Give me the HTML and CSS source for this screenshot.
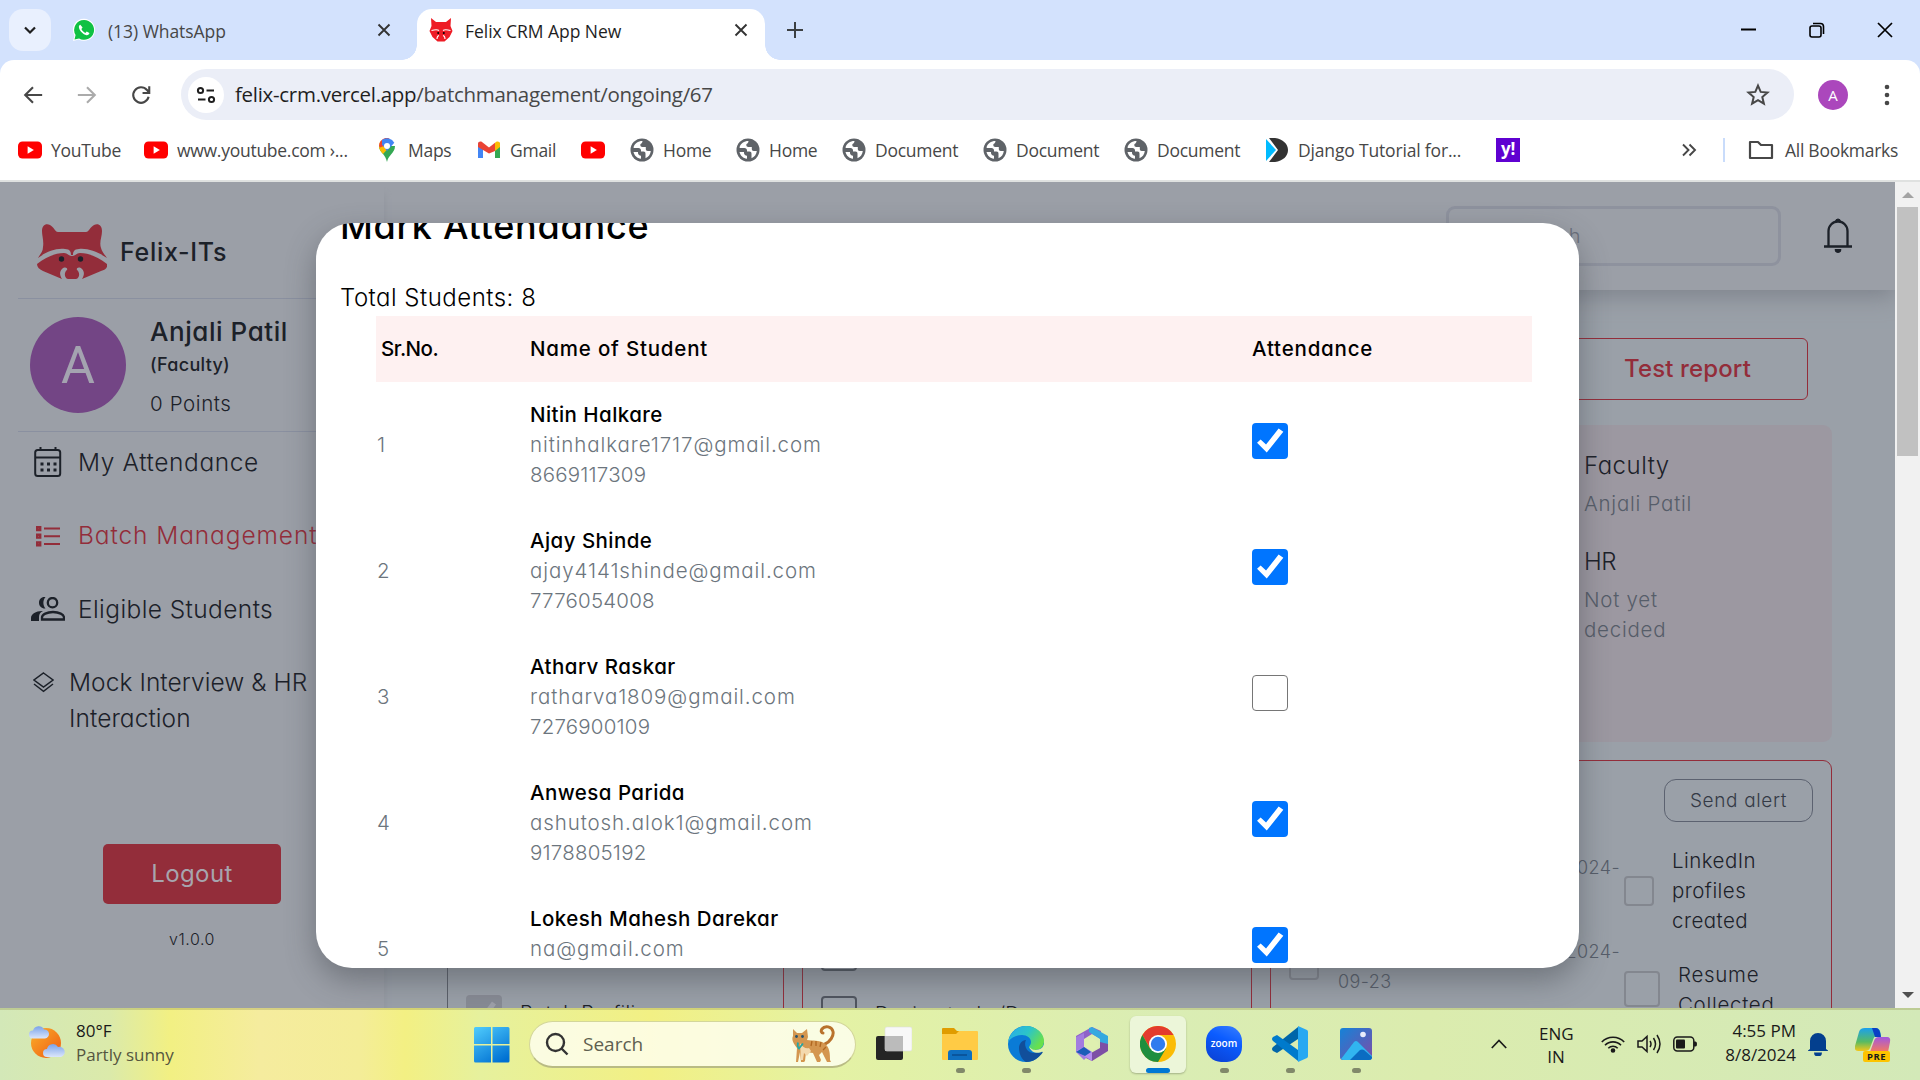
FILE: index.html
```html
<!DOCTYPE html>
<html lang="en">
<head>
<meta charset="utf-8">
<title>Felix CRM App New</title>
<link rel="stylesheet" href="styles.css">
</head>
<body>
<svg class="defs" width="0" height="0">
  <symbol id="yt" viewBox="0 0 24 24"><rect x="0" y="3.5" width="24" height="17" rx="4.5" fill="#f00"/><path d="M9.6 8.3v7.4l6.3-3.7z" fill="#fff"/></symbol>
  <symbol id="globe" viewBox="0 0 24 24"><circle cx="12" cy="12" r="11.5" fill="#5f6368"/><path d="M12.500 3c-4.500 0-8 2.500-9 6.500L4 10h4.500c1.500 0 2.500 1 2.500 2.300v1.200h2.500c1.300 0 2 .9 2 2.200v4.600c3-1.200 5-4 5.300-7.300h-3c-1.300 0-2-.8-2-2V9h-3.500c-1.200 0-2-.8-2-2 0-1.500 2.200-1.500 2.200-4zM3.500 14c.8 3.800 3.700 6.300 7.500 6.700v-3c-1.800 0-3-1.200-3-2.900V14z" fill="#fff"/></symbol>
  <symbol id="close" viewBox="0 0 16 16"><path d="M2.500 2.500l11 11M13.500 2.500l-11 11" stroke="currentColor" stroke-width="1.900"/></symbol>
  <symbol id="raccoon" viewBox="0 0 70 55"><path fill="currentColor" d="M5 7C5 1 9-1 13 1c4 2 5 7 8 7h28c3 0 4-5 8-7 4-2 8 0 8 6 0 6-3 11-1 17 1 4 4 7 6 10-9-6-19-10-28-9-5 0-6 3-6 6h-2c0-3-1-6-6-6C18 24 9 28 1 34c2-4 5-6 5-11 1-6-1-11-1-16zM0 40c8-6 17-11 27-11 4 0 4 3 8 3s4-3 8-3c10 0 19 5 27 11 1 4-2 6-6 7l-19 8c2-3 3-7 0-10-3-3-6-1-5 1 3 2 3 8-1 9h-8c-4-1-4-7-1-9 1-2-2-4-5-1-3 3-2 7 0 10L6 47C2 45 0 43 0 40z"/><circle cx="24.500" cy="35" r="2.700" fill="#1c2129"/><circle cx="43.500" cy="35" r="2.700" fill="#1c2129"/></symbol>
</svg>

<header class="tabstrip">
  <button class="tab-search"><svg width="16" height="16" viewBox="0 0 16 16"><path d="M3 5.500l5 5 5-5" fill="none" stroke="#1f1f1f" stroke-width="2.200"/></svg></button>
  <div class="tab">
    <svg class="fav" viewBox="0 0 24 24"><path d="M12 .8a11 11 0 0 0-9.500 16.600L1 23l5.800-1.500A11 11 0 1 0 12 .8z" fill="#fff"/><path d="M12 2a9.900 9.900 0 0 0-8.400 15l-1.100 4.500 4.600-1.100A9.900 9.900 0 1 0 12 2z" fill="#0fc143"/><path d="M8.300 6.800c-.9.200-1.600 1.300-1.400 2.500.6 3.700 4.200 7.300 7.600 7.900 1.500.2 2.800-.8 2.900-2.200l-2.700-1.500-1.300 1.400c-1.700-.7-3.300-2.300-4-3.900l1.200-1.400z" fill="#fff"/></svg>
    <span class="title">(13) WhatsApp</span>
    <svg class="x" width="16" height="16"><use href="#close"/></svg>
  </div>
  <div class="tab active">
    <svg class="fav red" viewBox="0 0 24 24"><path fill="currentColor" d="M2 0l5 4h10l5-4-.5 8 2 5-3 6-5 4.500h-7L3.500 19l-3-6 2-5z"/><path d="M2.500 12.500Q8 11 10 12.500M21.500 12.500Q16 11 14 12.500M8 21q0-3 2-3.500M16 21q0-3-2-3.500" stroke="#fff" stroke-width="1.100" fill="none"/><circle cx="9.200" cy="15" r="1"/><circle cx="14.800" cy="15" r="1"/></svg>
    <span class="title">Felix CRM App New</span>
    <svg class="x" width="16" height="16"><use href="#close"/></svg>
  </div>
  <svg class="plus" width="18" height="18" viewBox="0 0 18 18"><path d="M9 1v16M1 9h16" stroke="#3c4043" stroke-width="2"/></svg>
  <div class="winctl">
    <svg width="16" height="16" viewBox="0 0 16 16"><path d="M0 7.500h15" stroke="#000" stroke-width="2"/></svg>
    <svg width="16" height="16" viewBox="0 0 16 16" fill="none" stroke="#000" stroke-width="1.600"><rect x="1" y="4" width="11" height="11" rx="2"/><path d="M4 1.500h7.500a3 3 0 0 1 3 3V12"/></svg>
    <svg width="16" height="16" viewBox="0 0 16 16"><path d="M1 1l14 14M15 1L1 15" stroke="#000" stroke-width="1.700"/></svg>
  </div>
</header>

<div class="chrome">
  <div class="toolbar">
    <svg class="nav" viewBox="0 0 24 24"><path d="M22 12H4M12 3.500L3.500 12l8.500 8.500" fill="none" stroke="#474747" stroke-width="2.300"/></svg>
    <svg class="nav" viewBox="0 0 24 24"><path d="M2 12h18M12 3.500l8.500 8.500-8.500 8.500" fill="none" stroke="#ababab" stroke-width="2.300"/></svg>
    <svg class="nav" viewBox="0 0 24 24"><path d="M20.300 14A8.500 8.500 0 1 1 18.500 6.500L20.500 9M21 2.500v7.300h-7.300" fill="none" stroke="#474747" stroke-width="2.300"/></svg>
    <div class="omnibox">
      <span class="site"><svg width="20" height="20" viewBox="0 0 20 20" fill="none" stroke="#1f1f1f" stroke-width="2"><circle cx="4.500" cy="5.500" r="2.600"/><path d="M10.500 5.500H18M2 14.500h7.500"/><circle cx="15.500" cy="14.500" r="2.600"/></svg></span>
      <span class="url"><span class="host">felix-crm.vercel.app</span>/batchmanagement/ongoing/67</span>
      <svg width="24" height="24" viewBox="0 0 24 24"><path d="M12 2.600l2.700 6.300 6.800.6-5.200 4.500 1.600 6.700L12 17.200l-5.900 3.500L7.700 14 2.500 9.500l6.800-.6z" fill="none" stroke="#474747" stroke-width="2"/></svg>
    </div>
    <span class="me">A</span>
    <svg class="dots" width="6" height="22" viewBox="0 0 6 22" fill="#474747"><circle cx="3" cy="3" r="2.300"/><circle cx="3" cy="11" r="2.300"/><circle cx="3" cy="19" r="2.300"/></svg>
  </div>
  <nav class="bookmarks">
    <a class="bm b1"><svg><use href="#yt"/></svg><span>YouTube</span></a>
    <a class="bm b2"><svg><use href="#yt"/></svg><span>www.youtube.com ›...</span></a>
    <a class="bm b3"><svg viewBox="0 0 24 24"><path d="M12 24c-1-4-2-5.500-4-8-2-2.500-4-4.500-4-8l16 0c0 4-2 6-4 8.500S13 20 12 24z" fill="#34a853"/><path d="M4 8a8 8 0 0 1 1.900-5.200L14 9.500 8 16C6 13.500 4 11.500 4 8z" fill="#fbbc04"/><path d="M5.900 2.800A8 8 0 0 1 14.500.4L9 8 5 9.500 4 8q0-3 1.900-5.200z" fill="#ea4335"/><path d="M7 2A8 8 0 0 1 19.300 4.800L12 13 7 6.500z" fill="#4285f4"/><circle cx="12" cy="8" r="3" fill="#fff"/></svg><span>Maps</span></a>
    <a class="bm b4"><svg viewBox="0 0 24 24"><path d="M1 4.500v15.500h5V10z" fill="#4285f4"/><path d="M23 4.500v15.500h-5V10z" fill="#34a853"/><path d="M1 9V6c0-2.500 2.500-3 4-2l7 5.500V15.500z" fill="#ea4335"/><path d="M18 4.800l1-.8c1.500-1 4-.5 4 2v3l-5 4z" fill="#fbbc04"/><path d="M18 4.800v8.200l-6 2.500V9.500z" fill="#ea4335"/></svg><span>Gmail</span></a>
    <a class="bm b5"><svg><use href="#yt"/></svg></a>
    <a class="bm b6"><svg><use href="#globe"/></svg><span>Home</span></a>
    <a class="bm b7"><svg><use href="#globe"/></svg><span>Home</span></a>
    <a class="bm b8"><svg><use href="#globe"/></svg><span>Document</span></a>
    <a class="bm b9"><svg><use href="#globe"/></svg><span>Document</span></a>
    <a class="bm b10"><svg><use href="#globe"/></svg><span>Document</span></a>
    <a class="bm b11"><svg viewBox="0 0 24 24"><path d="M4 0h6c8 1 13 6 13 12S18 23 10 24H4l9-12z" fill="#333"/><path d="M1 1l10 11L1 23z" fill="#0bf"/></svg><span>Django Tutorial for...</span></a>
    <a class="bm b12"><span class="yahoo">y!</span></a>
    <svg class="more" width="16" height="16" viewBox="0 0 16 16"><path d="M2 2.500L7.500 8 2 13.500M8.500 2.500L14 8l-5.500 5.500" fill="none" stroke="#474747" stroke-width="1.900"/></svg>
    <i class="sep"></i>
    <svg class="folder" width="26" height="24" viewBox="0 0 26 24"><path d="M2 20V4h8l3 3h11v13z" fill="none" stroke="#474747" stroke-width="2.200" stroke-linejoin="round"/></svg>
    <span class="allbm">All Bookmarks</span>
  </nav>
</div>

<div class="viewport">
  <div class="app">
    <aside class="sidebar">
      <div class="brand"><svg width="70" height="55"><use href="#raccoon"/></svg><b>Felix-ITs</b></div>
      <div class="profile">
        <span class="avatar">A</span>
        <div><b class="pname">Anjali Patil</b><b class="role">(Faculty)</b><span class="points">0 Points</span></div>
      </div>
      <nav class="menu">
        <a class="attend"><svg class="i1" width="28" height="30" viewBox="0 0 28 30" fill="none" stroke="#1c2129" stroke-width="2"><rect x="1.200" y="3" width="25" height="26" rx="2.500"/><path d="M1 10.500h26M6.500 0v3M21.500 0v3"/><path d="M6.500 17h3m3.500 0h3m3.500 0h3M6.500 23h3m3.500 0h3m3.500 0h3" stroke-width="3"/></svg><span>My Attendance</span></a>
        <a class="on"><svg class="i2" width="24" height="21" viewBox="0 0 24 21" fill="none" stroke="currentColor" stroke-width="2"><path d="M8 2.500h16M8 10.200h16M8 17.900h16"/><path d="M1.200 1.200h3v2.800h-3zM1.200 8.800h3v2.800h-3zM1.200 16.500h3v2.800h-3z" stroke-width="2.400"/></svg><span>Batch Management</span></a>
        <a><svg class="i3" width="34" height="24" viewBox="0 0 34 24" fill="none" stroke="#1c2129" stroke-width="2.300"><circle cx="21.500" cy="5.700" r="4.700"/><path d="M11 22.500v-2c0-3 5-5.500 11-5.500s11 2.500 11 5.500v2z"/><path d="M13.500 0C10 0 8 2.500 8 5.700s2.500 6 6.500 5.800c-2.800-3.500-2.800-8 0-11.500zM8 24v-4c0-3 1.500-5 4-6-6-.5-12 2.500-12 7v3z" fill="#1c2129" stroke="none"/></svg><span>Eligible Students</span></a>
        <a class="mock"><svg class="i4" width="21" height="21" viewBox="0 0 21 21" fill="none" stroke="#1c2129" stroke-width="1.500"><path d="M10.500 1L20 8l-9.500 7L1 8zM1 12l9.500 7.300L20 12"/></svg><span>Mock Interview &amp; HR<br>Interaction</span></a>
      </nav>
      <button class="logout">Logout</button>
      <span class="ver">v1.0.0</span>
    </aside>
    <main class="main">
      <div class="topbar">
        <div class="search"><svg width="22" height="22" viewBox="0 0 22 22" fill="none" stroke="#6a707c" stroke-width="2.500"><circle cx="10" cy="9" r="7.500"/><path d="M15 15l6 6"/></svg><span>Search</span></div>
        <svg class="bell" width="28" height="36" viewBox="0 0 28 36" fill="none" stroke="#1c2129" stroke-width="2.300"><path d="M0 29.500h28M4.500 29V14a9.500 9.500 0 0 1 19 0v15"/><path d="M11.500 4.500a2.500 2.500 0 0 1 5 0zM11 32.500h6a3 3 0 0 1-6 0z" fill="#1c2129" stroke-width="1"/></svg>
      </div>
      <div class="content">
        <button class="report">Test report</button>
        <section class="info"><div>
          <h4>Faculty</h4><p>Anjali Patil</p>
          <h4 class="hr">HR</h4><p>Not yet<br>decided</p></div>
        </section>
        <div class="cards">
          <section class="card c1"><div class="task"><i class="cb done"><svg viewBox="0 0 36 36"><path d="M7 19l7 8L28 8" fill="none" stroke="#9da0a8" stroke-width="5"/></svg></i><span>Batch Profiling</span></div></section>
          <section class="card c2"><div class="task"><i class="cb"></i></div><div class="task"><i class="cb"></i><span>Design tasks/Demo</span></div></section>
          <section class="card c3">
            <div class="alertrow"><button class="alert">Send alert</button></div>
            <div class="cols">
              <div class="dates">
                <div class="date1">2024-</div>
                <div class="date2"><i class="cb sm"></i><div><span class="r">2024-</span><span>09-23</span></div></div>
              </div>
              <div class="todo">
                <div class="td"><i class="cb sm"></i><span>LinkedIn<br>profiles<br>created</span></div>
                <div class="td td2"><i class="cb lt"></i><span>Resume<br>Collected</span></div>
              </div>
            </div>
          </section>
        </div>
      </div>
    </main>
  </div>
  <div class="scrollbar"><i class="up"></i><i class="thumb"></i><i class="down"></i></div>

  <div class="modal">
    <h2>Mark Attendance</h2>
    <p class="total">Total Students: 8</p>
    <div class="table">
      <div class="row head"><span class="sr">Sr.No.</span><span>Name of Student</span><span>Attendance</span></div>
      <div class="row"><span class="no">1</span><div><b>Nitin Halkare</b><span class="mail">nitinhalkare1717@gmail.com</span><span class="tel">8669117309</span></div><i class="chk on"></i></div>
      <div class="row"><span class="no">2</span><div><b>Ajay Shinde</b><span class="mail">ajay4141shinde@gmail.com</span><span class="tel">7776054008</span></div><i class="chk on"></i></div>
      <div class="row"><span class="no">3</span><div><b>Atharv Raskar</b><span class="mail">ratharva1809@gmail.com</span><span class="tel">7276900109</span></div><i class="chk"></i></div>
      <div class="row"><span class="no">4</span><div><b>Anwesa Parida</b><span class="mail">ashutosh.alok1@gmail.com</span><span class="tel">9178805192</span></div><i class="chk on"></i></div>
      <div class="row"><span class="no">5</span><div><b>Lokesh Mahesh Darekar</b><span class="mail">na@gmail.com</span></div><i class="chk on"></i></div>
    </div>
  </div>
</div>

<footer class="taskbar">
  <div class="weather">
    <svg width="38" height="36" viewBox="0 0 38 36"><defs><linearGradient id="sun" x2="1" y2="1"><stop offset="0" stop-color="#fbb02a"/><stop offset="1" stop-color="#ee5a12"/></linearGradient><linearGradient id="cl" x2="0" y2="1"><stop offset="0" stop-color="#7ba3ea"/><stop offset="1" stop-color="#dbe6fb"/></linearGradient></defs><circle cx="18" cy="19" r="15" fill="url(#sun)"/><path d="M5 14.500a4 4 0 0 1 0-8 6 6 0 0 1 11-1 4.500 4.500 0 0 1 1 9z" fill="url(#cl)"/><path d="M19 33a4 4 0 0 1 0-8 6 6 0 0 1 11-2 5 5 0 0 1 3 10z" fill="url(#cl)"/></svg>
    <div>80°F<br><span class="dim">Partly sunny</span></div>
  </div>
  <svg class="win" width="36" height="36" viewBox="0 0 36 36"><defs><linearGradient id="wg" gradientUnits="userSpaceOnUse" x1="4" y1="0" x2="26" y2="36"><stop offset="0" stop-color="#4cc8fb"/><stop offset="1" stop-color="#0070d2"/></linearGradient></defs><path d="M0 1.500q0-1.500 1.500-1.500H17v17H0zM18.500 0H34q1.500 0 1.500 1.500V17h-17zM0 18.500h17v17H1.500Q0 35.500 0 34zM18.500 18.500h17V34q0 1.500-1.500 1.500H18.500z" fill="url(#wg)"/></svg>
  <div class="tsearch">
    <svg width="24" height="24" viewBox="0 0 24 24" fill="none" stroke="#333" stroke-width="2.400"><circle cx="10.500" cy="10.500" r="8.500"/><path d="M16.500 16.500l6 6"/></svg>
    <span>Search</span>
    <svg class="cat" width="46" height="38" viewBox="0 0 46 38"><path d="M35 19c5-2 9-8 8-12.500-1-5-8-6.500-11-2.500-1.500 2-.5 4 1 4" fill="none" stroke="#b9722c" stroke-width="3" stroke-linecap="round"/><path d="M3 4l4 4h5l5-4 1 8-1 3c6 1 12 0 17 3 6 4 6 11 6 17l1 2h-4l-2-4-3-6-3 3 2 5-1 2h-3l-4-9-7-1-1 9-1 1h-3l-1-10-2 10H6l1-14C4 19 1 15 3 11z" fill="#d4964f"/><path d="M10 18c2 4 6 6 9 5l2 3-4 5-3-3-1 7h-2z" fill="#f3d9ae"/><path d="M8 17.500q-1 4 1 6l4-5" fill="none" stroke="#23a6a6" stroke-width="1.800"/><circle cx="6.500" cy="11.500" r="1.400" fill="#27526b"/><circle cx="12.500" cy="11.500" r="1.400" fill="#27526b"/><path d="M22 16l-1 5M26 16v5M31 17l-1 5M36 22l-3 3" stroke="#b0661f" stroke-width="1.300"/></svg>
  </div>
  <div class="apps">
    <div class="ap"><svg viewBox="0 0 36 36"><rect x="0" y="10" width="27" height="24" rx="2" fill="#252525"/><rect x="9" y="1" width="27" height="24" rx="2" fill="#f8f8f8" stroke="#ddd" stroke-width=".6"/><path d="M9 10h18v15H9z" fill="#bbb"/></svg></div>
    <div class="ap run"><svg viewBox="0 0 36 36"><path d="M0 3q0-1 1-1h11l3 3h20v10H0z" fill="#e09c00"/><path d="M0 8h14l3-3h18q1 0 1 1v27q0 1-1 1H1q-1 0-1-1z" fill="#ffcb45"/><path d="M6 34V27q0-3 3-3h18q3 0 3 3v7z" fill="#0f6fc0"/><path d="M10 29h15" stroke="#0a4c91" stroke-width="1.500"/></svg></div>
    <div class="ap run"><svg viewBox="0 0 36 36"><defs><linearGradient id="eg" x2="1" y2=".5"><stop offset="0" stop-color="#27a9ee"/><stop offset=".55" stop-color="#2cc5c8"/><stop offset="1" stop-color="#68e04c"/></linearGradient></defs><circle cx="18" cy="18" r="18" fill="#0a7bd6"/><path d="M0 17C1 7 9 0 18 0c10 0 18 7 18 15 0 6-4 9-9 9-4 0-6-1-6-3 0-1 2-2 2-5 0-4-4-7-9-7C7 9 1 13 0 17z" fill="url(#eg)"/><path d="M11 22c0-4 3-8 7-8-2 3-1 12 7 13 4 0 7-1 10-1-4 6-10 10-17 10-4-2-7-8-7-14z" fill="#114f9b"/><path d="M36 18v9l-1.500-1.500C30 28 23 27 21.500 21c2 3 6 3.500 9 2.500 3-.8 5-3 5.500-5.500z" fill="#e1f0ac"/></svg></div>
    <div class="ap"><svg viewBox="0 0 36 36"><path d="M18 1l9 4v8l-9-5-8 5v10l-8-5V10z" fill="#8e62c8"/><path d="M15 2l3-1 16 9v14l-8-4v-7l-11-7z" fill="#34a8e0"/><path d="M34 18v7l-16 10-8-4 16-9v-6z" fill="#7d4fa5"/><path d="M2 11l8-4v14l8 5-8 8-8-8z" fill="#a27ce0"/><path d="M2 25l8-4 8 5v9z" fill="#b58cf0"/><path d="M10 21l7 5-6 4-9-4z" fill="#1c5db8"/><path d="M18 12l6 4v5l-6 4-6-4v-5z" fill="#dff0b0"/></svg></div>
    <div class="ap cur"><svg viewBox="0 0 36 36"><circle cx="18" cy="18" r="18" fill="#fbbc05"/><path d="M2.400 9A18 18 0 0 1 33.600 9H18L10 22z" fill="#e33b2e"/><path d="M2.400 9A18 18 0 0 0 18 36l8-13.500H10z" fill="#1e8e3e"/><circle cx="18" cy="18" r="9" fill="#fff"/><circle cx="18" cy="18" r="7.200" fill="#2f7cee"/></svg></div>
    <div class="ap run"><span class="zoom">zoom</span></div>
    <div class="ap run"><svg viewBox="0 0 36 36"><path d="M26 1v12L5 27l-4-2q-2-2 0-4z" fill="#0065a9"/><path d="M26 35V24L5 9l-4 2q-2 2 0 4z" fill="#007acc"/><path d="M26 0l9 4q1 .5 1 2v24q0 1.500-1 2l-9 4z" fill="#27a8f2"/></svg></div>
    <div class="ap run"><svg viewBox="0 0 36 36"><defs><linearGradient id="pg" x2="1" y2="1"><stop offset="0" stop-color="#1483d8"/><stop offset="1" stop-color="#7d4ca8"/></linearGradient></defs><rect x="2" y="2" width="32" height="32" rx="3" fill="url(#pg)"/><path d="M3 33l13-17q2-2 4 0l14 14q0 4-3 4H5z" fill="#31b5f0"/><path d="M12 34l10-10q2-1 4 0l8 7q0 3-3 3z" fill="#0a6cc2"/><circle cx="25" cy="8.500" r="2.800" fill="#e8ecfb"/></svg></div>
  </div>
  <div class="tray">
    <svg class="chev" width="16" height="10" viewBox="0 0 16 10"><path d="M.8 9L8 1.500 15.200 9" fill="none" stroke="#1a1a1a" stroke-width="1.700"/></svg>
    <div class="lang">ENG<br>IN</div>
    <svg class="wifi" width="24" height="18" viewBox="0 0 24 18" fill="none" stroke="#1a1a1a" stroke-width="1.600"><path d="M.8 7a15.500 15.500 0 0 1 22.400 0M4 10.300a11 11 0 0 1 16 0M7.300 13.200a6.600 6.600 0 0 1 9.400 0"/><circle cx="12" cy="15.500" r="1.500" fill="#1a1a1a"/></svg>
    <svg class="spk" width="25" height="20" viewBox="0 0 25 20" fill="none" stroke="#1a1a1a" stroke-width="1.500"><path d="M1 7h4l5-4.500v15L5 13H1zM13 7q2 3 0 6M16.500 4q4 6 0 12M20 1q6 9 0 18"/></svg>
    <svg class="bat" width="24" height="16" viewBox="0 0 24 16"><rect x=".8" y="1" width="20" height="14" rx="3.500" fill="none" stroke="#1a1a1a" stroke-width="1.500"/><rect x="3" y="3.500" width="9" height="9" rx="1" fill="#1a1a1a"/><path d="M21 5.500h1.500q1.500 0 1.500 2.500t-1.500 2.500H21z" fill="#1a1a1a"/></svg>
    <div class="clock">4:55 PM<br>8/8/2024</div>
    <svg class="nbell" width="20" height="23" viewBox="0 0 20 23" fill="#033f8e"><path d="M2 16V8a8 8 0 0 1 16 0v8l2 1.500V18H0v-.5zM6 19.500h8a4 4 0 0 1-8 0z"/></svg>
    <div class="copilot"><svg width="36" height="34" viewBox="0 0 36 34"><defs><linearGradient id="ca" x2="0" y2="1"><stop offset="0" stop-color="#1aa0ee"/><stop offset=".6" stop-color="#58bb62"/><stop offset="1" stop-color="#f5c718"/></linearGradient><linearGradient id="cb" x2="0" y2="1"><stop offset="0" stop-color="#a158e0"/><stop offset="1" stop-color="#f77a5c"/></linearGradient></defs><path d="M10 0h10q4 0 5 3l1 5h-4q-3 0-4 4l-3 8q-1 3-5 3H3q-4 0-3-5L4 4q1-4 6-4z" fill="url(#ca)"/><path d="M17 0h4q4 0 5 9h-6z" fill="#0a3fc5"/><path d="M24 9h8q4 0 3 5l-2 10H15l4-11q1-4 5-4z" fill="url(#cb)"/></svg><span class="pre">PRE</span></div>
  </div>
</footer>
</body>
</html>
```
FILE: styles.css
```css
* { box-sizing: border-box; }
body { margin: 0; width: 1920px; height: 1080px; overflow: hidden; display: flex; flex-direction: column; background: #d3e2fd; font-family: "Open Sans", "Noto Sans", sans-serif; color: #1f1f1f; }
button { font: inherit; border: 0; padding: 0; background: none; color: inherit; letter-spacing: inherit; }
h2, h4, p { margin: 0; font-weight: inherit; }
svg { display: block; flex: none; }
.defs { position: absolute; }
i { font-style: normal; display: block; }

/* browser tabs */
.tabstrip { height: 60px; display: flex; align-items: flex-start; padding: 9px 27px 0 9px; font-size: 17.500px; letter-spacing: -.05px; }
.tab-search { width: 42px; height: 42px; border-radius: 14px; background: #e9f0fe; display: grid; place-items: center; }
.tab { height: 51px; display: flex; align-items: center; padding: 0 25px 9px 21px; width: 366px; color: #474747; }
.tab .title { padding-top: 2px; }
.tab .fav { width: 24px; height: 24px; margin-right: 12px; }
.tab .red { color: #ee1c25; }
.tab .x { margin-left: auto; color: #333; }
.tab.active { position: relative; width: 348px; background: #fff; border-radius: 15px 15px 0 0; padding: 0 16px 9px 12px; color: #1f1f1f; }
.tab.active::before, .tab.active::after { content: ""; position: absolute; bottom: 0; width: 15px; height: 15px; }
.tab.active::before { left: -15px; background: radial-gradient(circle at 0 0, transparent 14.500px, #fff 15px); }
.tab.active::after { right: -15px; background: radial-gradient(circle at 100% 0, transparent 14.500px, #fff 15px); }
.plus { margin: 12px 0 0 21px; }
.winctl { margin-left: auto; display: flex; gap: 52px; padding-top: 13px; }

/* toolbar and bookmarks */
.chrome { height: 122px; background: #fff; border-bottom: 2px solid #dfe1e0; border-radius: 14px 14px 0 0; flex: none; }
.toolbar { display: flex; align-items: center; padding: 9px 30px 0 22px; height: 60px; }
.nav { width: 22px; height: 22px; margin-right: 32px; }
.omnibox { width: 1613px; height: 51px; margin-left: -3px; border-radius: 26px; background: #ebeef7; display: flex; align-items: center; padding: 0 24px 0 7px; }
.site { width: 36px; height: 36px; border-radius: 50%; background: #fff; display: grid; place-items: center; }
.url { flex: 1; margin-left: 11px; padding-bottom: 2px; font-size: 20.500px; letter-spacing: -.29px; color: #474747; }
.host { color: #1f1f1f; }
.me { width: 30px; height: 30px; margin-left: 24px; border-radius: 50%; background: #ab47bc; color: #fff; font-size: 15px; line-height: 30px; text-align: center; }
.dots { margin-left: auto; }
.bookmarks { display: flex; align-items: center; height: 60px; padding-left: 18px; font-size: 17.500px; letter-spacing: -.27px; color: #474747; white-space: nowrap; }
.bm { display: flex; align-items: center; gap: 9px; flex: none; }
.bm span { margin-top: -1px; }
.bm svg { width: 24px; height: 24px; }
.b1 { width: 126px; } .b2 { width: 231px; } .b3 { width: 102px; } .b4 { width: 104px; } .b5 { width: 49px; }
.b6, .b7 { width: 106px; } .b8, .b9, .b10 { width: 141px; } .b11 { width: 231px; } .b12 { width: 185px; }
.b11 span { letter-spacing: -.17px; }
.yahoo { width: 24px; height: 24px; background: #5f01d1; color: #fff; font: bold 17px/22px "Open Sans", sans-serif; text-align: center; }
.sep { width: 2px; height: 24px; margin: 0 23px 0 26px; background: #c9dcfb; }
.allbm { margin: -1px 0 0 11px; }

/* page */
.viewport { position: relative; height: 826px; flex: none; display: flex; overflow: hidden; font-family: Inter, "Open Sans", sans-serif; font-feature-settings: "cv11", "ss03"; font-weight: 300; }
.app { width: 1895px; display: flex; background: #9b9fa7; color: #1c2129; overflow: hidden; }
.sidebar { width: 384px; flex: none; position: relative; z-index: 1; box-shadow: 1px 12px 6px #93979f; display: flex; flex-direction: column; padding-left: 18px; }
.brand { height: 117px; display: flex; align-items: center; gap: 13px; padding: 23px 0 0 19px; border-bottom: 1px solid #8a90a0; color: #932d3a; }
.brand b { font-size: 25px; font-weight: 500; color: #1c2129; letter-spacing: .7px; }
.profile { height: 133px; display: flex; gap: 24px; padding: 16px 0 0 12px; border-bottom: 1px solid #8a90a0; }
.profile b, .profile .points { display: block; width: max-content; }
.avatar { width: 96px; height: 96px; margin-top: 2px; border-radius: 50%; background: #734585; color: #a4a3b0; font: 52px/98px Roboto, sans-serif; text-align: center; }
.pname { font-size: 26px; line-height: 34px; margin-bottom: 2px; font-weight: 500; letter-spacing: .55px; }
.role { font-size: 18px; line-height: 27px; font-weight: 500; letter-spacing: .3px; }
.points { font-size: 20.500px; line-height: 30px; margin-top: 11px; letter-spacing: .6px; }
.menu { padding: 12px 0 0 13px; display: flex; flex-direction: column; gap: 37.500px; font-size: 24.500px; line-height: 36px; white-space: nowrap; letter-spacing: .4px; }
.menu a { display: flex; }
.menu .attend { letter-spacing: .6px; }
.menu .on { color: #932d3a; letter-spacing: .9px; margin-top: -.5px; }
.menu .mock { letter-spacing: .06px; }
.i1 { margin: 3px 16px 0 3px; } .i2 { margin: 9px 18px 0 5px; } .i3 { margin: 6px 13px 0 0; } .i4 { margin: 8px 15px 0 2px; }
.logout { width: 178px; height: 60px; margin: 107.500px 0 0 85px; padding-bottom: 1px; border-radius: 5px; background: #932d3a; color: #a7a5ae; font-size: 24px; font-weight: 400; letter-spacing: .4px; flex: none; }
.ver { width: 348px; margin-top: 23px; line-height: 24px; font-size: 16px; letter-spacing: .55px; text-align: center; }

.main { flex: 1; min-width: 0; background: #9aa0a8; clip-path: inset(0); }
.topbar { height: 108px; display: flex; justify-content: flex-end; align-items: flex-start; padding: 24px 43px 0 0; background: #9b9fa7; box-shadow: 0 6px 22px #7e838c; }
.search { width: 335px; height: 60px; border: 3px solid #8e929e; border-radius: 9px; display: flex; align-items: center; gap: 20px; padding-left: 20px; margin-right: 43px; font-size: 20px; letter-spacing: .7px; color: #6a707c; }
.bell { margin-top: 11px; }
.content { padding: 48px 63px 0; display: flex; flex-direction: column; }
.report { align-self: flex-end; width: 310px; height: 62px; margin-right: 24px; padding: 0 0 2px 69px; border: 1px solid #932d3a; border-radius: 6px; color: #932d3a; font-size: 24px; font-weight: 500; letter-spacing: .14px; }
.info { height: 317px; margin-top: 25px; border-radius: 9px; background: #9c98a1; display: flex; justify-content: flex-end; padding-top: 23px; }
.info div { width: 248px; }
.info h4 { width: max-content; font-size: 24px; line-height: 36px; letter-spacing: .5px; }
.info p { width: max-content; margin-top: 5px; font-size: 20.500px; line-height: 30px; letter-spacing: .75px; color: #565d69; }
.info .hr { margin-top: 25px; letter-spacing: -.6px; }
.cards { margin-top: 18px; display: grid; grid-template-columns: 337px 450px 562px; gap: 18px; height: 400px; }
.card { border: 1px solid #932d3a; border-radius: 9px; }
.c1 { border-left-color: #5a5f69; padding: 234px 0 0 18px; }
.c2 { padding: 174px 0 0 18px; }
.c2 .task + .task { margin-top: 25px; }
.task { display: flex; align-items: center; gap: 18px; font-size: 20px; height: 36px; letter-spacing: .3px; }
.cb { width: 36px; height: 36px; flex: none; border: 2px solid #50555f; border-radius: 4px; }
.cb.done { background: #878b94; border: 0; }
.cb.sm { width: 30px; height: 30px; border-color: #83878f; }
.cb.lt { border-color: #83878f; }
.alertrow { display: flex; justify-content: flex-end; padding: 18px 18px 0 0; }
.alert { width: 149px; height: 43px; border: 1px solid #5c6270; border-radius: 12px; font-size: 19px; letter-spacing: .65px; color: #343a46; font-weight: 350; }
.cols { display: flex; margin-top: 24px; }
.dates { width: 335px; margin-left: 18px; flex: none; font-size: 18px; color: #565d69; font-weight: 350; letter-spacing: .4px; }
.date1 { text-align: right; padding-right: 4px; line-height: 30px; margin-top: 7px; }
.date2 { display: flex; gap: 19px; line-height: 30px; margin-top: 54px; padding-right: 4px; }
.date2 .sm { margin-top: 13px; }
.date2 div { flex: 1; display: flex; flex-direction: column; }
.date2 .r { text-align: right; }
.todo { font-size: 20.500px; line-height: 30px; font-weight: 350; letter-spacing: .45px; }
.td { display: flex; gap: 18px; align-items: center; }
.td2 { align-items: flex-start; margin-top: 24px; letter-spacing: .7px; }
.td2 .lt { margin-top: 11px; }

.scrollbar { width: 25px; background: #f1f1f1; display: flex; flex-direction: column; align-items: center; }
.up { margin-top: 10px; border: 6px solid transparent; border-top: 0; border-bottom: 6px solid #a3a3a3; }
.thumb { width: 21px; height: 249px; margin-top: 9px; background: #c1c1c1; }
.down { margin: auto 0 10px; border: 6px solid transparent; border-bottom: 0; border-top: 6px solid #505050; }

/* attendance dialog, scrolled a little */
.modal { position: absolute; z-index: 2; left: 316px; top: 41px; width: 1263px; height: 745px; border-radius: 36px; background: #fff; color: #000; overflow: hidden; padding-left: 24px; box-shadow: 0 12px 30px rgba(60, 64, 72, .45); }
.modal h2 { margin-top: -24px; font-size: 36px; line-height: 54px; font-weight: 500; letter-spacing: .75px; }
.total { margin-top: 27px; font-size: 24px; line-height: 36px; font-weight: 350; letter-spacing: .5px; }
.table { width: 1156px; margin-left: 36px; font-size: 20.500px; line-height: 30px; }
.row { display: grid; grid-template-columns: 154px 722px 1fr; padding: 18px 0; height: 126px; color: #6c757d; font-weight: 350; }
.row.head { height: 66px; background: #fef1f1; color: #000; font-weight: 500; letter-spacing: .8px; }
.row .sr { padding-left: 5px; letter-spacing: -.5px; }
.row b { display: block; color: #000; font-weight: 500; letter-spacing: .45px; }
.mail, .tel { display: block; letter-spacing: .9px; }
.tel { letter-spacing: .2px; }
.no { padding: 30px 0 0 1px; }
.chk { width: 36px; height: 36px; margin-top: 23px; border: 1.500px solid #767676; border-radius: 4px; }
.chk.on { border: 0; background: #0075ff; position: relative; }
.chk.on::after { content: ""; position: absolute; inset: 0; background: #fff; clip-path: polygon(14% 55%, 24% 46%, 39% 60%, 74% 15%, 87% 24%, 41% 82%); }

/* taskbar */
.taskbar { height: 72px; display: flex; align-items: flex-start; border-top: 2px solid rgba(140, 140, 70, .3); background: linear-gradient(90deg, #d3e8b8 0, #dbeaaa 110px, #f2f083 170px, #f5ec9e 260px, #f4ed98 360px, #f3f083 405px, #e6f19d 480px, #f2f084 650px, #e4f2a4 830px, #daedb4 1160px, #dbecae 1430px, #d3e9b8 1920px); font-size: 17px; line-height: 24px; color: #1a1a1a; white-space: nowrap; }
.weather { display: flex; width: 473px; flex: none; padding: 9px 0 0 28px; gap: 10px; }
.weather svg { margin-top: 5px; }
.dim { color: #555540; }
.win { margin: 17px 19px 0 1px; }
.tsearch { width: 327px; height: 47px; flex: none; margin-top: 11px; border-radius: 24px; background: rgba(255, 255, 244, .8); border: 1px solid #d3d69a; border-bottom: 2px solid #b9bb84; display: flex; align-items: center; padding: 0 19px 0 15px; font-size: 19px; color: #5f5f50; }
.tsearch span { margin-left: 14px; }
.cat { margin-left: auto; }
.apps { display: flex; gap: 10px; margin: 6px 0 0 10px; }
.ap { width: 56px; height: 57px; padding: 10px 10px 0; border-radius: 6px; position: relative; }
.ap svg { width: 36px; height: 36px; }
.ap.cur { background: #ecf6d9; box-shadow: 0 1px 2px rgba(0, 0, 0, .25); }
.run::after, .cur::after { content: ""; position: absolute; left: 24px; bottom: 0; width: 9px; height: 5px; border-radius: 3px; background: #81896a; }
.cur::after { left: 16px; width: 24px; background: #0078d4; }
.zoom { display: block; width: 36px; height: 36px; border-radius: 15px; background: linear-gradient(25deg, #0a3fd0, #0b5cff 60%, #3a80ff); color: #fff; font: 600 10px/34px "Open Sans", sans-serif; text-align: center; }
.tray { display: flex; margin-left: 107px; }
.chev { margin: 29px 32px 0 0; }
.lang { width: 34px; text-align: center; margin: 13px 28px 0 0; line-height: 22.500px; }
.wifi { margin: 25px 12px 0 0; }
.spk { margin: 24px 11px 0 0; }
.bat { margin: 26px 20px 0 0; }
.clock { width: 79px; text-align: right; margin: 9px 12px 0 0; }
.nbell { margin: 23px 27px 0 0; }
.copilot { position: relative; padding-top: 18px; }
.pre { position: absolute; left: 8px; top: 41px; width: 27px; height: 11px; border-radius: 2px; background: #fdc400; font: bold 9.500px/11px "Open Sans", sans-serif; text-align: center; letter-spacing: .5px; }
```
